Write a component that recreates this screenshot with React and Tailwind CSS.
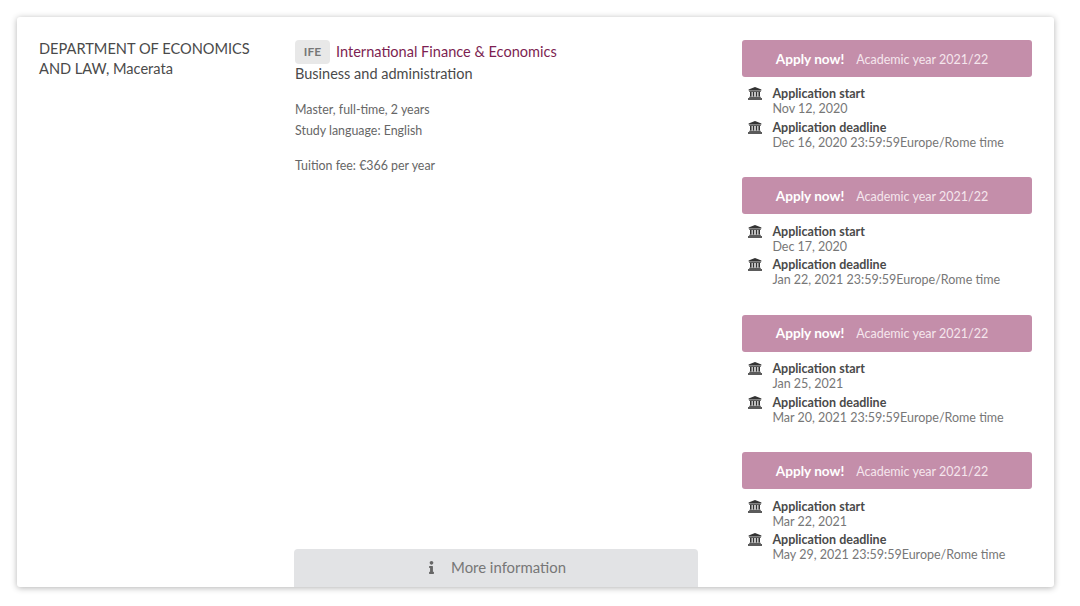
import React from 'react';
import { FaInfo } from 'react-icons/fa';

const rounds = [
  { start: 'Nov 12, 2020', deadline: 'Dec 16, 2020 23:59:59Europe/Rome time' },
  { start: 'Dec 17, 2020', deadline: 'Jan 22, 2021 23:59:59Europe/Rome time' },
  { start: 'Jan 25, 2021', deadline: 'Mar 20, 2021 23:59:59Europe/Rome time' },
  { start: 'Mar 22, 2021', deadline: 'May 29, 2021 23:59:59Europe/Rome time' },
];

// old font-awesome style bank icon
function BankIcon() {
  return (
    <svg viewBox="0 0 14 13" className="w-[14px] h-[13px]" fill="currentColor">
      <path d="M7 0L13.4 2.6V3.4H.6V2.6Z" />
      <rect x="1.2" y="3.8" width="11.6" height="1" />
      <rect x="2" y="5" width="1.6" height="4.6" />
      <rect x="4.7" y="5" width="1.6" height="4.6" />
      <rect x="7.7" y="5" width="1.6" height="4.6" />
      <rect x="10.4" y="5" width="1.6" height="4.6" />
      <rect x="1.2" y="9.8" width="11.6" height="1" />
      <rect x="0" y="11.2" width="14" height="1.6" />
    </svg>
  );
}

function DateRow({ label, value }) {
  return (
    <div className="flex">
      <div className="w-[30.4px] pl-[6px] pt-[1px] shrink-0 text-[#333]">
        <BankIcon />
      </div>
      <div className="text-[12.5px] leading-[15px]">
        <div className="font-bold text-[#4a4a4a]">{label}</div>
        <div className="text-[#777]">{value}</div>
      </div>
    </div>
  );
}

function ApplyBlock({ start, deadline }) {
  return (
    <div className="h-[137.4px]">
      <button className="w-full h-[37px] rounded-[3px] bg-[#c48eaa] text-white pr-[10px] pt-[1px] flex items-center justify-center">
        <div className="flex items-baseline gap-3">
          <span className="font-bold text-[13.6px]">Apply now!</span>
          <span className="text-[12.5px] text-[#f5e6ed]">Academic year 2021/22</span>
        </div>
      </button>
      <div className="mt-[9.4px] flex flex-col gap-[3.4px]">
        <DateRow label="Application start" value={start} />
        <DateRow label="Application deadline" value={deadline} />
      </div>
    </div>
  );
}

export default function App() {
  return (
    <div className="pl-[17px] pt-[17px] pr-[26px] pb-[19px] bg-white font-['Lato','Noto_Sans',sans-serif]">
      <div className="h-[570px] rounded-[3px] bg-white shadow-[0_1px_6px_rgba(0,0,0,0.3)] flex pl-[22px] overflow-hidden">
        <div className="w-[255px] pt-[22px] text-[14.6px] leading-[20px] text-[#4a4a4a]">
          DEPARTMENT OF ECONOMICS
          <br />
          AND LAW, Macerata
        </div>

        <div className="w-[404px] flex flex-col justify-between pt-[23px]">
          <div className="pl-px">
            <div className="flex items-center gap-[6px] h-[24px]">
              <span className="w-[35px] h-[24px] rounded-[4px] bg-[#e8e8e8] text-[#777] text-[12px] font-bold flex items-center justify-center">IFE</span>
              <a className="text-[14.55px] text-[#7d1f52]">International Finance &amp; Economics</a>
            </div>
            <div className="-mt-px text-[14.5px] leading-[22px] text-[#4a4a4a]">Business and administration</div>
            <div className="mt-[14px] text-[12.4px] leading-[21px] text-[#666]">
              <div>Master, full-time, 2 years</div>
              <div>Study language: English</div>
            </div>
            <div className="mt-[14px] text-[12.4px] leading-[21px] text-[#666]">Tuition fee: €366 per year</div>
          </div>
          <button className="h-[38px] rounded-t-[4px] bg-[#e2e3e5] text-[#777] text-[14.9px] pl-[1px] pb-[2px] flex items-center justify-center gap-[15px]">
            <FaInfo className="w-[9px] h-[13px] text-[#666]" />
            More information
          </button>
        </div>

        <div className="w-[290px] ml-[44px] pt-[23px]">
          {rounds.map((r) => (
            <ApplyBlock key={r.start} start={r.start} deadline={r.deadline} />
          ))}
        </div>
      </div>
    </div>
  );
}
